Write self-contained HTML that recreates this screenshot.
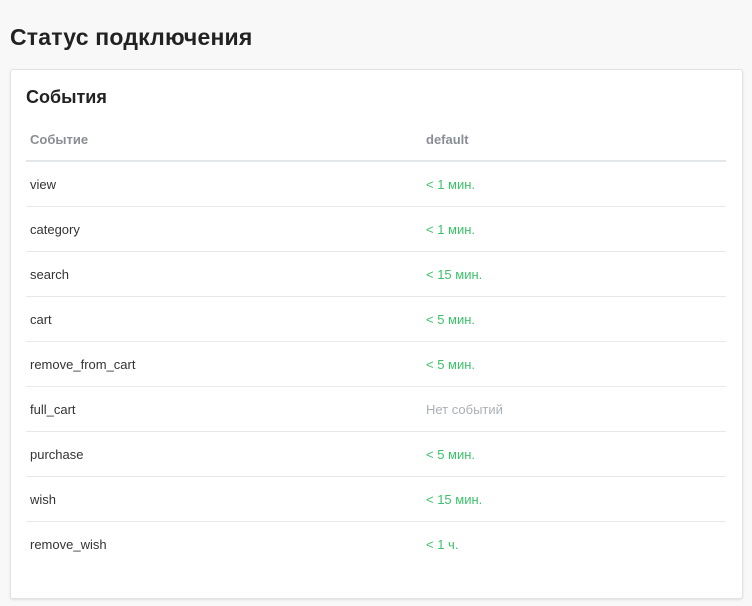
<!DOCTYPE html>
<html><head><meta charset="utf-8"><style>
body{margin:0;background:#f8f8f8;font-family:"Liberation Sans",sans-serif;width:752px;height:606px;overflow:hidden;position:relative}
h1{position:absolute;left:10px;top:24px;margin:0;font-size:23px;letter-spacing:0.2px;font-weight:600;color:#222;}
.card{position:absolute;left:10px;top:69px;width:731px;height:528px;background:#fff;border:1px solid #e3e3e3;border-radius:3px;box-shadow:0 1px 2px rgba(0,0,0,.1)}
h2{position:absolute;left:15px;top:17px;margin:0;font-size:18px;font-weight:600;color:#222}
table{position:absolute;left:15px;top:48px;width:700px;border-collapse:collapse;font-size:13px}
th{text-align:left;color:#8a8e94;font-weight:bold;height:42px;padding:0 4px;border-bottom:2px solid #e4e7ea}
td{height:44px;padding:0 4px;border-bottom:1px solid #e8e8e8;color:#333}
tr:last-child td{border-bottom:none}
.c1{width:388px}
.g{color:#3cc26a}.n{color:#aab0b7}
</style></head><body>
<h1>Статус подключения</h1>
<div class="card"><h2>События</h2>
<table>
<tr><th class="c1">Событие</th><th>default</th></tr>
<tr><td>view</td><td class="g">&lt; 1 мин.</td></tr>
<tr><td>category</td><td class="g">&lt; 1 мин.</td></tr>
<tr><td>search</td><td class="g">&lt; 15 мин.</td></tr>
<tr><td>cart</td><td class="g">&lt; 5 мин.</td></tr>
<tr><td>remove_from_cart</td><td class="g">&lt; 5 мин.</td></tr>
<tr><td>full_cart</td><td class="n">Нет событий</td></tr>
<tr><td>purchase</td><td class="g">&lt; 5 мин.</td></tr>
<tr><td>wish</td><td class="g">&lt; 15 мин.</td></tr>
<tr><td>remove_wish</td><td class="g">&lt; 1 ч.</td></tr>
</table></div>
</body></html>
